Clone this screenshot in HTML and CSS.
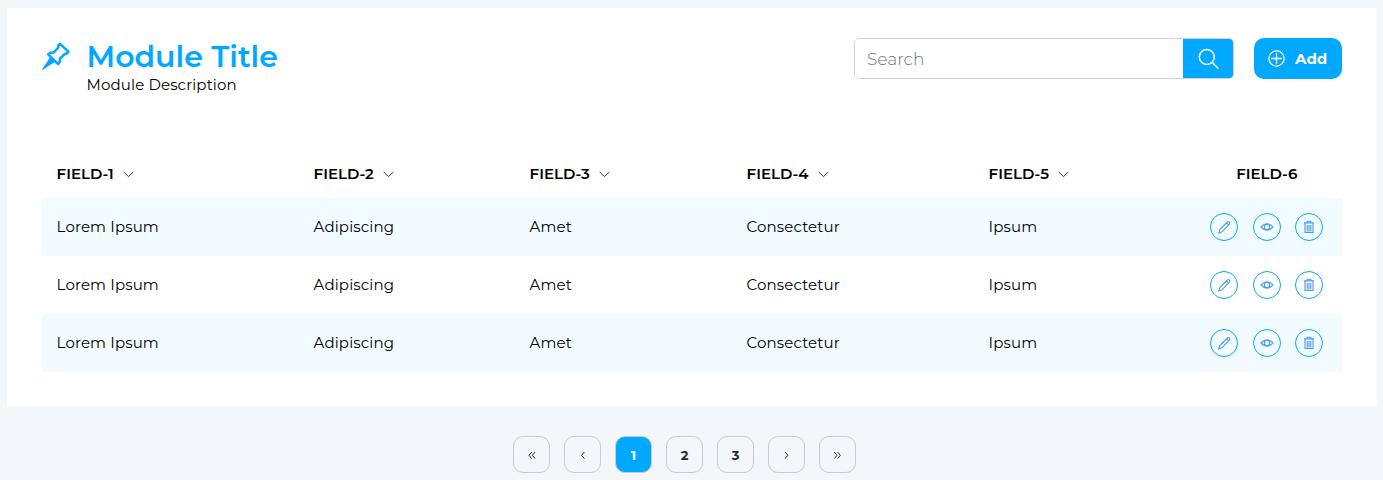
FILE: index.html
```html
<!DOCTYPE html>
<html lang="en">
<head>
<meta charset="utf-8">
<title>Module Title</title>
<link rel="stylesheet" href="styles.css">
</head>
<body>
<svg class="sprite" width="0" height="0">
  <symbol id="chevron" viewBox="0 0 11 7"><path d="M.7 1 5.5 5.6 10.3 1"/></symbol>
  <symbol id="pencil" viewBox="0 0 14 14"><path d="M1.8 12.8 2.8 9.6 10.3 2Q11.2 1.2 12.2 2T12.6 4L5 11.8ZM9.3 2.8 11.7 5.2"/></symbol>
  <symbol id="eye" viewBox="0 0 14 14"><path d="M1 7Q4 3.8 7 3.8T13 7Q10 10.2 7 10.2T1 7Z"/><circle cx="7" cy="7" r="2.7"/></symbol>
  <symbol id="trash" viewBox="0 0 14 14"><path d="M2 2.9H12M5.2 3V1.2H8.8V3M3 3.5V12.5H11V3.5M5.2 5V11.5M7 5V11.5M8.8 5V11.5"/></symbol>
</svg>
<main class="card">
  <header class="head">
    <svg class="pin" viewBox="0 0 28 28"><path class="pin-body" d="M18 1.8 26.3 9.5Q25.5 12 22.5 12.1L18 16.7Q18.7 19.5 16 22L6.2 12.4Q8.5 9.8 11.5 10.7L16 6Q15.8 3 18 1.8Z"/><path class="pin-needle" d="M8.5 14.5 13.8 19.5 8 23 .6 28 0 27.2 5 20Z"/></svg>
    <div class="titles">
      <h1 class="title">Module Title</h1>
      <p class="desc">Module Description</p>
    </div>
    <form class="search">
      <input class="search-input" type="text" placeholder="Search">
      <button class="search-btn" type="button" aria-label="Search"><svg width="22" height="22" viewBox="0 0 22 22"><circle cx="9.8" cy="9" r="7.5"/><path d="M15.2 14.4 21.3 20.5"/></svg></button>
    </form>
    <button class="add" type="button"><svg width="17" height="17" viewBox="0 0 17 17"><circle cx="8.5" cy="8.5" r="7.6"/><path d="M8.5 3.2V13.8M3.2 8.5H13.8"/></svg><span>Add</span></button>
  </header>
  <table class="grid">
    <colgroup><col class="c1"><col class="c2"><col class="c3"><col class="c4"><col class="c5"><col class="c6"></colgroup>
    <thead>
      <tr>
        <th>FIELD-1<svg class="sort"><use href="#chevron"/></svg></th>
        <th>FIELD-2<svg class="sort"><use href="#chevron"/></svg></th>
        <th>FIELD-3<svg class="sort"><use href="#chevron"/></svg></th>
        <th>FIELD-4<svg class="sort"><use href="#chevron"/></svg></th>
        <th>FIELD-5<svg class="sort"><use href="#chevron"/></svg></th>
        <th class="last">FIELD-6</th>
      </tr>
    </thead>
    <tbody>
      <tr><td>Lorem Ipsum</td><td>Adipiscing</td><td>Amet</td><td>Consectetur</td><td>Ipsum</td>
        <td class="last"><div class="actions"><a class="act"><svg><use href="#pencil"/></svg></a><a class="act"><svg><use href="#eye"/></svg></a><a class="act"><svg><use href="#trash"/></svg></a></div></td></tr>
      <tr><td>Lorem Ipsum</td><td>Adipiscing</td><td>Amet</td><td>Consectetur</td><td>Ipsum</td>
        <td class="last"><div class="actions"><a class="act"><svg><use href="#pencil"/></svg></a><a class="act"><svg><use href="#eye"/></svg></a><a class="act"><svg><use href="#trash"/></svg></a></div></td></tr>
      <tr><td>Lorem Ipsum</td><td>Adipiscing</td><td>Amet</td><td>Consectetur</td><td>Ipsum</td>
        <td class="last"><div class="actions"><a class="act"><svg><use href="#pencil"/></svg></a><a class="act"><svg><use href="#eye"/></svg></a><a class="act"><svg><use href="#trash"/></svg></a></div></td></tr>
    </tbody>
  </table>
</main>
<nav class="pages">
  <a class="page"><svg width="9" height="9" viewBox="0 0 9 9"><path d="M4.7 2 2 5.3 4.7 8.6M8 2 5.3 5.3 8 8.6"/></svg></a>
  <a class="page"><svg width="9" height="9" viewBox="0 0 9 9"><path d="M6.4 2 3.5 5.3 6.4 8.6"/></svg></a>
  <a class="page active">1</a>
  <a class="page">2</a>
  <a class="page">3</a>
  <a class="page"><svg width="9" height="9" viewBox="0 0 9 9"><path d="M3 2 5.9 5.3 3 8.6"/></svg></a>
  <a class="page"><svg width="9" height="9" viewBox="0 0 9 9"><path d="M1.3 2 4 5.3 1.3 8.6M4.6 2 7.3 5.3 4.6 8.6"/></svg></a>
</nav>
</body>
</html>
```
FILE: styles.css
```css
* { box-sizing: border-box; }
html { overflow: hidden; }
body { margin: 0; padding: 8px 6px 0 7px; background: #f3f7fa; color: #000; font-family: Montserrat, Inter, sans-serif; font-size: 15px; }
svg { fill: none; stroke: currentColor; flex: none; }
button { font: inherit; border: 0; padding: 0; }
.sprite { display: none; }
.card { height: 398px; padding: 30px 35px 0; background: #fff; }
.head { display: flex; align-items: flex-start; height: 112px; }
.pin { width: 28px; height: 28px; margin: 4px 16.5px 0 0; color: #00a8ff; }
.pin-body { stroke-width: 2.5; stroke-linejoin: round; }
.pin-needle { fill: currentColor; stroke: none; }
.titles { flex: 1; }
.title { margin: 0; font-size: 30px; line-height: 37px; font-weight: 600; color: #00a8ff; }
.desc { margin: 0; line-height: 20px; letter-spacing: 0.13px; }
.search { display: flex; width: 380px; height: 41px; margin-right: 20px; border: 1px solid #cdd3db; border-radius: 5px; overflow: hidden; }
.search-input { flex: 1; min-width: 0; border: 0; padding: 0 12px; outline: 0; font: 300 17px Montserrat, Inter, sans-serif; }
.search-input::placeholder { color: #6c757d; opacity: 1; }
.search-btn { display: flex; align-items: center; justify-content: center; width: 50px; background: #00a8ff; color: #fff; }
.search-btn svg { stroke-width: 1.5; }
.add { display: flex; align-items: center; gap: 10px; width: 88px; height: 41px; padding-left: 14px; border-radius: 10px; background: #00a8ff; color: #fff; font-weight: 700; }
.add svg { stroke-width: 1.3; }
.grid { width: 1300px; table-layout: fixed; border-collapse: collapse; }
.c1 { width: 257px; } .c2 { width: 216px; } .c3 { width: 217px; } .c4 { width: 242px; } .c5 { width: 218px; } .c6 { width: 150px; }
th, td { padding: 0 15px 2px 14.6px; text-align: left; }
th { height: 48px; font-weight: 600; }
td { height: 58px; letter-spacing: 0.13px; }
tbody tr:nth-child(odd) { background: #f2fbff; }
.sort { width: 11px; height: 7px; margin-left: 9.4px; vertical-align: 1px; stroke: #333; }
th.last { text-align: center; }
td.last { padding: 0 18px; }
.actions { display: flex; justify-content: space-between; width: 113px; }
.act { display: flex; align-items: center; justify-content: center; width: 28px; height: 28px; border: 1px solid #00a8ff; border-radius: 50%; color: #4a9cf5; }
.act svg { width: 14px; height: 14px; stroke-width: 1.1; }
.pages { display: flex; justify-content: center; gap: 14px; padding: 30px 0 0; margin-right: 15px; }
.page { display: flex; align-items: center; justify-content: center; width: 37px; height: 37px; border: 1px solid #c8cbce; border-radius: 10px; color: #212b36; font-size: 13px; font-weight: 700; }
.page.active { background: #00a8ff; color: #fff; }
```
